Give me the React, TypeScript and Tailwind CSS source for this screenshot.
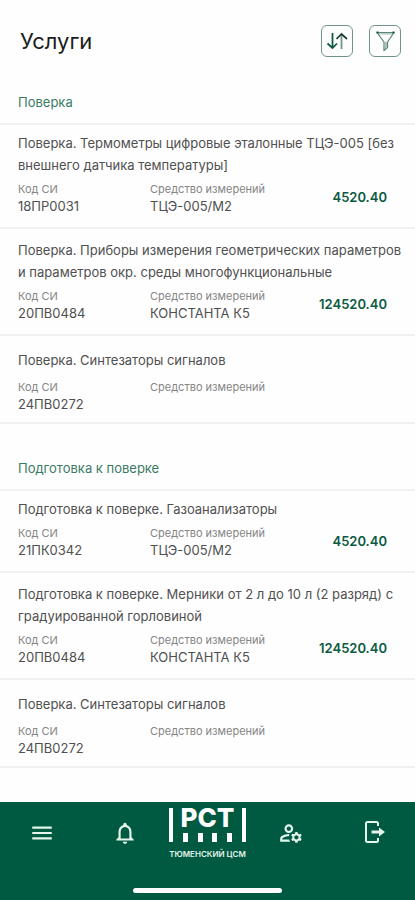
import { clsx } from "clsx";
import { MdMenu, MdNotificationsNone, MdOutlineManageAccounts } from "react-icons/md";

type Service = {
  title: string;
  code: string;
  device?: string;
  price?: string;
  compact?: boolean;
};

type ServiceGroup = {
  name: string;
  services: Service[];
};

const groups: ServiceGroup[] = [
  {
    name: "Поверка",
    services: [
      {
        title: "Поверка. Термометры цифровые эталонные ТЦЭ-005 [без внешнего датчика температуры]",
        code: "18ПР0031",
        device: "ТЦЭ-005/М2",
        price: "4520.40",
        compact: true,
      },
      {
        title: "Поверка. Приборы измерения геометрических параметров и параметров окр. среды многофункциональные",
        code: "20ПВ0484",
        device: "КОНСТАНТА К5",
        price: "124520.40",
      },
      { title: "Поверка. Синтезаторы сигналов", code: "24ПВ0272" },
    ],
  },
  {
    name: "Подготовка к поверке",
    services: [
      {
        title: "Подготовка к поверке. Газоанализаторы",
        code: "21ПК0342",
        device: "ТЦЭ-005/М2",
        price: "4520.40",
        compact: true,
      },
      {
        title: "Подготовка к поверке. Мерники от 2 л до 10 л (2 разряд) с градуированной горловиной",
        code: "20ПВ0484",
        device: "КОНСТАНТА К5",
        price: "124520.40",
      },
      { title: "Поверка. Синтезаторы сигналов", code: "24ПВ0272" },
    ],
  },
];

function SortIcon() {
  return (
    <svg viewBox="0 0 24 24" className="size-6" fill="none" strokeWidth="1.75">
      <path d="M7.500 4v15M2.500 14.500l5 4.500 4.500-4.500" stroke="#0b5a41" />
      <path d="M16.500 20V5" stroke="#6f9585" />
      <path d="M11.500 10l5-5 5.500 5" stroke="#1d3f33" />
    </svg>
  );
}

function FilterIcon() {
  return (
    <svg viewBox="0 0 24 24" className="size-6" fill="none" stroke="#5c8776" strokeLinejoin="round">
      <path d="M4 3.500h17L14.500 13v5.500L11 21.500V13z" strokeWidth="1.250" />
      <path d="M6 5h13" stroke="#a9c0b7" />
      <path d="M13 13v6" stroke="#a9c0b7" strokeWidth="2" />
      <path d="M3.500 3.500h2M19.500 3.500h2" stroke="#0b5a41" strokeWidth="2" />
    </svg>
  );
}

function LogoutIcon() {
  return (
    <svg viewBox="0 0 24 24" className="size-6" fill="none" stroke="currentColor" strokeWidth="2">
      <path d="M16 6V3.500Q16 2 14.500 2H5.500Q4 2 4 3.500v17Q4 22 5.500 22h9q1.500 0 1.500-1.500V18" />
      <path d="M9.500 12H18" strokeWidth="3" />
      <path d="M17 7.500v9l6-4.500z" fill="currentColor" stroke="none" />
    </svg>
  );
}

function Logo() {
  return (
    <div className="flex flex-col items-center">
      <div className="flex h-[34px] gap-2">
        <span className="w-1 bg-white" />
        <div className="flex flex-col justify-between">
          <span className="text-[26px] leading-5 font-extrabold text-white">РСТ</span>
          <div className="flex justify-between px-0.5">
            <span className="h-[9px] w-[5px] bg-white" />
            <span className="h-[9px] w-[5px] bg-white" />
            <span className="h-[9px] w-[5px] bg-white" />
            <span className="h-[9px] w-[5px] bg-white" />
          </div>
        </div>
        <span className="w-1 bg-white" />
      </div>
      <span className="mt-1.5 text-[8px] leading-3 font-semibold whitespace-nowrap">ТЮМЕНСКИЙ ЦСМ</span>
    </div>
  );
}

function ServiceCard({ title, code, device, price, compact }: Service) {
  return (
    <li
      className={clsx(
        "border-b-2 border-[#f1f1f1] pr-2 pl-[18px]",
        compact ? "pt-[7px]" : price ? "pt-2.5" : "pt-[13px]",
        price ? "pb-3" : "pb-[9px]",
      )}
    >
      <h3 className="text-[13px] leading-[22px] text-[#505050]">{title}</h3>
      <div className={clsx("flex items-center", price ? "mt-[5px]" : "mt-2")}>
        <div className="w-[132px]">
          <p className="text-[11px] leading-4 text-[#858585]">Код СИ</p>
          <p className="h-[18px] text-[13px] leading-[18px] text-[#505050]">{code}</p>
        </div>
        <div className="flex-1">
          <p className="text-[11px] leading-4 text-[#858585]">Средство измерений</p>
          <p className="h-[18px] text-[13px] leading-[18px] text-[#505050]">{device}</p>
        </div>
        {price && <p className="pr-5 text-[13px] font-semibold text-[#0b5a41]">{price}</p>}
      </div>
    </li>
  );
}

export default function App() {
  return (
    <div className="flex min-h-screen flex-col bg-[#fefefe] font-['Inter',sans-serif]">
      <header className="flex items-center justify-between pt-[25px] pr-[14px] pl-5">
        <h1 className="text-[22px] leading-8 text-[#1c1c1c]">Услуги</h1>
        <div className="flex gap-4">
          <button
            aria-label="Сортировка"
            className="flex size-8 items-center justify-center rounded-md border border-[#6f9585]"
          >
            <SortIcon />
          </button>
          <button
            aria-label="Фильтр"
            className="flex size-8 items-center justify-center rounded-md border border-[#6f9585]"
          >
            <FilterIcon />
          </button>
        </div>
      </header>

      <main className="flex-1 pt-[35px]">
        {groups.map((group) => (
          <section key={group.name} className="mb-[34px]">
            <h2 className="border-b-2 border-[#f1f1f1] pb-[11px] pl-[18px] text-[13px] leading-5 text-[#3a7a64]">
              {group.name}
            </h2>
            <ul>
              {group.services.map((service) => (
                <ServiceCard key={service.code} {...service} />
              ))}
            </ul>
          </section>
        ))}
      </main>

      <footer className="bg-[#005a41] pb-[7px] text-[#e4f5ec]">
        <nav className="grid grid-cols-5 items-start justify-items-center pt-1.5">
          <button aria-label="Меню" className="mt-3">
            <MdMenu className="size-[26px]" />
          </button>
          <button aria-label="Уведомления" className="mt-3">
            <MdNotificationsNone className="size-[26px]" />
          </button>
          <Logo />
          <button aria-label="Профиль" className="mt-3">
            <MdOutlineManageAccounts className="size-[26px]" />
          </button>
          <button aria-label="Выйти" className="mt-3">
            <LogoutIcon />
          </button>
        </nav>
        <div className="mx-auto mt-7 h-[5px] w-[149px] rounded-full bg-white" />
      </footer>
    </div>
  );
}
